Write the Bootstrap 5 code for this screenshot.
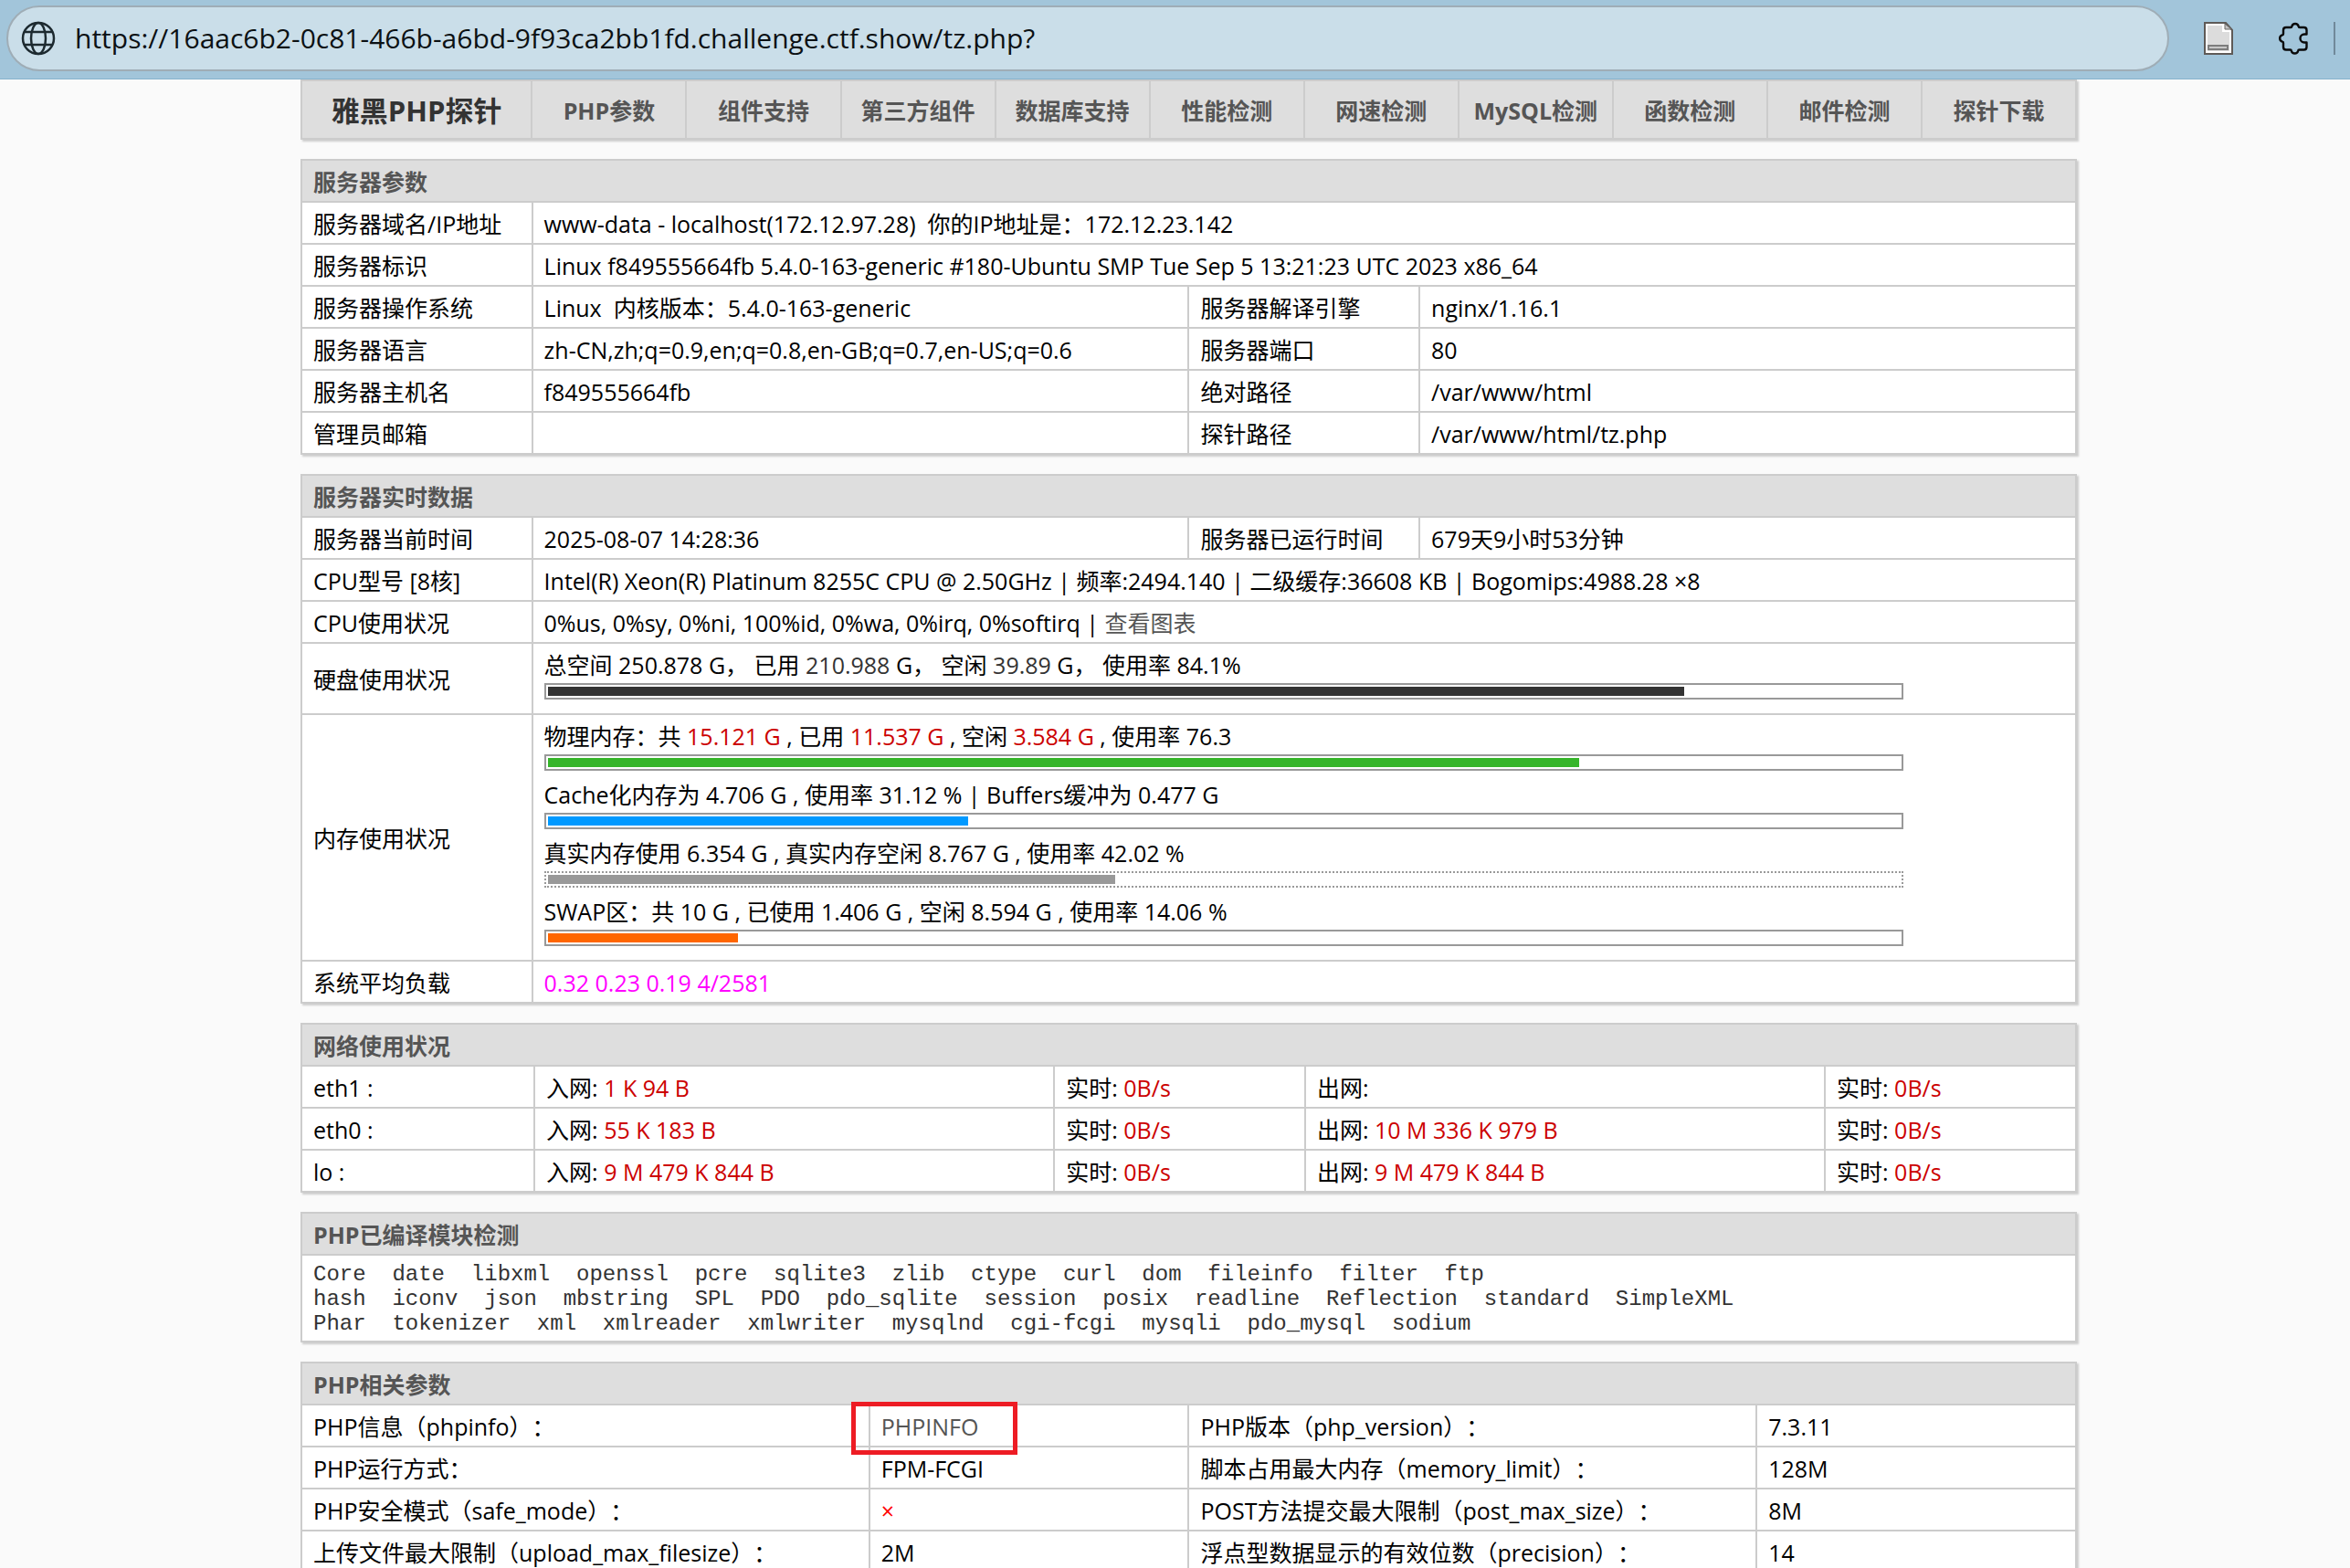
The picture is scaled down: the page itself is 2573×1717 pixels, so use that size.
<!DOCTYPE html>
<html lang="zh-CN">
<head>
<meta charset="utf-8">
<meta name="viewport" content="width=device-width, initial-scale=1">
<title>雅黑PHP探针</title>
<link href="https://cdn.jsdelivr.net/npm/bootstrap@5.3.0/dist/css/bootstrap.min.css" rel="stylesheet">
<style>
  body { background: #fafafa; color: #000; font: 25px/32px "Open Sans", "Noto Sans CJK SC", sans-serif; text-spacing-trim: space-all; overflow: hidden; }
  a { color: #555; text-decoration: none; }
  a:hover { color: #000; }

  /* browser bar */
  .browser-bar { background: #a2c5da; border-bottom: 1px solid #86b2cc; padding: 6px 16px 8px 7px; }
  .address { background: #cadee9; border: 2px solid #9fadb6; border-radius: 36px; height: 72px; padding: 0 14px; gap: 21px; margin-right: 38px; }
  .address input { background: none; border: 0; outline: 0; padding: 0; color: #0c1114; font-size: 30px; line-height: 40px; min-width: 0; }
  .bar-btn { background: none; border: 0; padding: 0; line-height: 0; }
  .bar-tools { gap: 50px; }
  .bar-rule { width: 2px; height: 36px; background: #71899a; margin-left: -22px; }

  /* probe page */
  .page-wrap { padding-left: 30px; }
  .probe-page { max-width: 1945px; }
  .panel { box-shadow: 2px 2px 2px #ccc; }
  .probe-nav { background: #dedede; border: 2px solid #ccc; height: 66px; margin-bottom: 21px; font-weight: 700; }
  .probe-nav a { flex: 1 1 0; border-left: 2px solid #ccc; padding-top: 2px; white-space: nowrap; }
  .probe-nav .brand-name { flex: 0 0 12.9%; border-left: 0; color: #333; font-size: 31px; }

  .probe.table { table-layout: fixed; color: #000; margin-bottom: 21px; background: #fff; border-color: #ccc; }
  .probe.table > :not(caption) > * > * { padding: 7px 12px 5px; border: 2px solid #ccc; background: #fff; color: #000; vertical-align: middle; }
  .probe.table > thead > tr > th { background: #dedede; color: #555; font-weight: 700; }
  .probe tbody th { font-weight: 400; }
  .num-red { color: #c00; }
  .num-dark { color: #333; }
  .mark-off { color: #f00; }
  .load-avg { color: #f0f; }
  .meter-text { line-height: 33px; }
  .meter { max-width: 1488px; height: 18px; border: 2px solid #999; padding: 2px; margin: 3px 0 10px; }
  .meter-dotted { border-style: dotted; }
  .meter-fill { height: 10px; }
  .fill-dark { background: #333; }
  .fill-green { background: #36b52a; }
  .fill-blue { background: #09f; }
  .fill-gray { background: #999; }
  .fill-orange { background: #f60; }
  .mod-list { font: 24px/27px "Liberation Mono", monospace; color: #333; white-space: pre-wrap; }
  .callout-frame { left: -21px; top: -4px; width: 182px; height: 58px; border: 5px solid #ed1c24; pointer-events: none; }
</style>
<script src="https://cdn.jsdelivr.net/npm/bootstrap@5.3.0/dist/js/bootstrap.bundle.min.js"></script>
</head>
<body>
<header class="browser-bar d-flex align-items-center">
  <label class="address d-flex align-items-center flex-grow-1">
    <svg width="38" height="38" viewBox="0 0 38 38" fill="none" stroke="#1d2a30" stroke-width="2.5" aria-hidden="true">
      <circle cx="19" cy="19" r="17"/><ellipse cx="19" cy="19" rx="8" ry="17"/><path d="M3.5 12h31M3.5 26h31"/>
    </svg>
    <input class="flex-grow-1" type="text" aria-label="地址" value="https://16aac6b2-0c81-466b-a6bd-9f93ca2bb1fd.challenge.ctf.show/tz.php?">
  </label>
  <div class="bar-tools d-flex align-items-center">
    <button class="bar-btn" type="button" aria-label="文档">
      <svg width="32" height="36" viewBox="0 0 32 36">
        <path d="M1 1h23l7 8v26H1z" fill="#fff" stroke="#5e5a57" stroke-width="2"/>
        <path d="M4 4h16v7h8v21H4z" fill="#dcdcdc"/>
        <path d="M23 2v6h7z" fill="#c4c4c4" stroke="#6b6865" stroke-width="1"/>
        <path d="M5 26h21v4H5z" fill="#c8c8c8" stroke="#7d7d7d" stroke-width="2"/>
      </svg>
    </button>
    <button class="bar-btn" type="button" aria-label="扩展">
      <svg width="32" height="36" viewBox="0 0 32 36" fill="none" stroke="#0a0a0a" stroke-width="2.4" stroke-linejoin="round">
        <path d="M8 6h5q1.200 0 1.400-1.200a3.700 3.700 0 0 1 7.200 0q.2 1.200 1.400 1.200h4.500q3 0 3 3v4.500h-2.500a4.500 4.500 0 0 0 0 9h2.500v5q0 3-3 3h-5q-1.200 0-1.400 1.200a3.700 3.700 0 0 1-7.200 0q-.2-1.200-1.400-1.200h-4.500q-3 0-3-3v-4.500q0-1.200-1-1.400a3.700 3.700 0 0 1 0-7.200q1-.2 1-1.400v-4q0-3 3-3z"/>
      </svg>
    </button>
    <span class="bar-rule"></span>
  </div>
</header>

<div class="page-wrap">
<main class="probe-page mx-auto">
  <nav class="probe-nav panel d-flex align-items-stretch">
    <a class="brand-name d-flex align-items-center justify-content-center" href="#top">雅黑PHP探针</a>
    <a class="d-flex align-items-center justify-content-center" href="#php">PHP参数</a>
    <a class="d-flex align-items-center justify-content-center" href="#module">组件支持</a>
    <a class="d-flex align-items-center justify-content-center" href="#third">第三方组件</a>
    <a class="d-flex align-items-center justify-content-center" href="#db">数据库支持</a>
    <a class="d-flex align-items-center justify-content-center" href="#perf">性能检测</a>
    <a class="d-flex align-items-center justify-content-center" href="#speed">网速检测</a>
    <a class="d-flex align-items-center justify-content-center" href="#mysql">MySQL检测</a>
    <a class="d-flex align-items-center justify-content-center" href="#func">函数检测</a>
    <a class="d-flex align-items-center justify-content-center" href="#mail">邮件检测</a>
    <a class="d-flex align-items-center justify-content-center" href="#down">探针下载</a>
  </nav>

  <table class="probe panel table">
    <colgroup><col style="width:13%"><col style="width:37%"><col style="width:13%"><col style="width:37%"></colgroup>
    <thead><tr><th colspan="4">服务器参数</th></tr></thead>
    <tbody>
      <tr><th>服务器域名/IP地址</th><td colspan="3">www-data - localhost(172.12.97.28)&nbsp; 你的IP地址是：172.12.23.142</td></tr>
      <tr><th>服务器标识</th><td colspan="3">Linux f849555664fb 5.4.0-163-generic #180-Ubuntu SMP Tue Sep 5 13:21:23 UTC 2023 x86_64</td></tr>
      <tr><th>服务器操作系统</th><td>Linux&nbsp; 内核版本：5.4.0-163-generic</td><th>服务器解译引擎</th><td>nginx/1.16.1</td></tr>
      <tr><th>服务器语言</th><td>zh-CN,zh;q=0.9,en;q=0.8,en-GB;q=0.7,en-US;q=0.6</td><th>服务器端口</th><td>80</td></tr>
      <tr><th>服务器主机名</th><td>f849555664fb</td><th>绝对路径</th><td>/var/www/html</td></tr>
      <tr><th>管理员邮箱</th><td></td><th>探针路径</th><td>/var/www/html/tz.php</td></tr>
    </tbody>
  </table>

  <table class="probe panel table">
    <colgroup><col style="width:13%"><col style="width:37%"><col style="width:13%"><col style="width:37%"></colgroup>
    <thead><tr><th colspan="4">服务器实时数据</th></tr></thead>
    <tbody>
      <tr><th>服务器当前时间</th><td>2025-08-07 14:28:36</td><th>服务器已运行时间</th><td>679天9小时53分钟</td></tr>
      <tr><th>CPU型号 [8核]</th><td colspan="3">Intel(R) Xeon(R) Platinum 8255C CPU @ 2.50GHz | 频率:2494.140 | 二级缓存:36608 KB | Bogomips:4988.28 ×8</td></tr>
      <tr><th>CPU使用状况</th><td colspan="3">0%us, 0%sy, 0%ni, 100%id, 0%wa, 0%irq, 0%softirq | <a href="#chart">查看图表</a></td></tr>
      <tr><th>硬盘使用状况</th><td colspan="3">
        <div class="meter-text">总空间 250.878 G，&nbsp;已用 <span class="num-dark">210.988</span> G，&nbsp;空闲 <span class="num-dark">39.89</span> G，&nbsp;使用率 84.1%</div>
        <div class="meter"><div class="meter-fill fill-dark" style="width:84.1%"></div></div>
      </td></tr>
      <tr><th>内存使用状况</th><td colspan="3">
        <div class="meter-text">物理内存：共 <span class="num-red">15.121 G</span> , 已用 <span class="num-red">11.537 G</span> , 空闲 <span class="num-red">3.584 G</span> , 使用率 76.3</div>
        <div class="meter"><div class="meter-fill fill-green" style="width:76.3%"></div></div>
        <div class="meter-text">Cache化内存为 4.706 G , 使用率 31.12 % | Buffers缓冲为 0.477 G</div>
        <div class="meter"><div class="meter-fill fill-blue" style="width:31.12%"></div></div>
        <div class="meter-text">真实内存使用 6.354 G , 真实内存空闲 8.767 G , 使用率 42.02 %</div>
        <div class="meter meter-dotted"><div class="meter-fill fill-gray" style="width:42.02%"></div></div>
        <div class="meter-text">SWAP区：共 10 G , 已使用 1.406 G , 空闲 8.594 G , 使用率 14.06 %</div>
        <div class="meter"><div class="meter-fill fill-orange" style="width:14.06%"></div></div>
      </td></tr>
      <tr><th>系统平均负载</th><td colspan="3"><span class="load-avg">0.32 0.23 0.19 4/2581</span></td></tr>
    </tbody>
  </table>

  <table class="probe panel table">
    <colgroup><col style="width:13.13%"><col style="width:29.29%"><col style="width:14.14%"><col style="width:29.29%"><col></colgroup>
    <thead><tr><th colspan="5">网络使用状况</th></tr></thead>
    <tbody>
      <tr><th>eth1 :</th><td>入网: <span class="num-red">1 K 94 B</span></td><td>实时: <span class="num-red">0B/s</span></td><td>出网:</td><td>实时: <span class="num-red">0B/s</span></td></tr>
      <tr><th>eth0 :</th><td>入网: <span class="num-red">55 K 183 B</span></td><td>实时: <span class="num-red">0B/s</span></td><td>出网: <span class="num-red">10 M 336 K 979 B</span></td><td>实时: <span class="num-red">0B/s</span></td></tr>
      <tr><th>lo :</th><td>入网: <span class="num-red">9 M 479 K 844 B</span></td><td>实时: <span class="num-red">0B/s</span></td><td>出网: <span class="num-red">9 M 479 K 844 B</span></td><td>实时: <span class="num-red">0B/s</span></td></tr>
    </tbody>
  </table>

  <table class="probe panel table">
    <thead><tr><th>PHP已编译模块检测</th></tr></thead>
    <tbody><tr><td><div class="mod-list">Core  date  libxml  openssl  pcre  sqlite3  zlib  ctype  curl  dom  fileinfo  filter  ftp
hash  iconv  json  mbstring  SPL  PDO  pdo_sqlite  session  posix  readline  Reflection  standard  SimpleXML
Phar  tokenizer  xml  xmlreader  xmlwriter  mysqlnd  cgi-fcgi  mysqli  pdo_mysql  sodium</div></td></tr></tbody>
  </table>

  <table class="probe panel table" id="php">
    <colgroup><col style="width:32%"><col style="width:18%"><col style="width:32%"><col style="width:18%"></colgroup>
    <thead><tr><th colspan="4">PHP相关参数</th></tr></thead>
    <tbody>
      <tr><th>PHP信息（phpinfo）：</th><td class="position-relative"><a href="#phpinfo">PHPINFO</a><span class="callout-frame position-absolute"></span></td><th>PHP版本（php_version）：</th><td>7.3.11</td></tr>
      <tr><th>PHP运行方式：</th><td>FPM-FCGI</td><th>脚本占用最大内存（memory_limit）：</th><td>128M</td></tr>
      <tr><th>PHP安全模式（safe_mode）：</th><td><span class="mark-off">×</span></td><th>POST方法提交最大限制（post_max_size）：</th><td>8M</td></tr>
      <tr><th>上传文件最大限制（upload_max_filesize）：</th><td>2M</td><th>浮点型数据显示的有效位数（precision）：</th><td>14</td></tr>
    </tbody>
  </table>
</main>
</div>
</body>
</html>
